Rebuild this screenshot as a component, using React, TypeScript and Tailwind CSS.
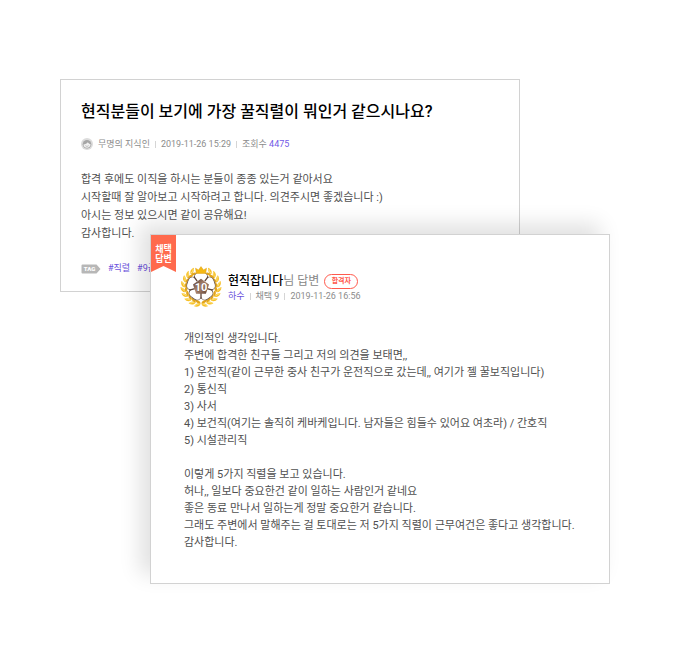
import React from "react";

const LEAF_STEPS = [0, 1, 2, 3, 4, 5, 6, 7, 8];
const PETAL_ANGLES = [0, 72, 144, 216, 288];

function Wreath() {
  return (
    <g>
      {LEAF_STEPS.map((step) => {
        const angle = 10 + step * 17.5;
        return (
          <g key={step} transform={`rotate(${angle} 21 21)`}>
            <path d="M23.500 37.200c-1.600-.6-4.400.5-6 4 3.400.5 5.800-1.200 6-4z" fill="#f6bf27" />
            <path d="M23.500 37c-1.600-2.600-4-3.200-6.200-2 1.400 2.200 3.800 3 6.200 2z" fill="#e3a51a" />
            <path d="M22.500 38c-1.400.3-2.900 1.200-4 2.600" fill="none" stroke="#ffe884" strokeWidth=".8" />
          </g>
        );
      })}
    </g>
  );
}

function Medal() {
  return (
    <svg viewBox="0 0 42 42" className="h-[42px] w-[42px] shrink-0" aria-label="10" role="img">
      <defs>
        <linearGradient id="medal-core" x1="0" y1="0" x2="1" y2="1">
          <stop offset="0" stopColor="#4a3026" />
          <stop offset=".5" stopColor="#b08a74" />
          <stop offset="1" stopColor="#5b3e30" />
        </linearGradient>
      </defs>
      <Wreath />
      <g transform="translate(42 0) scale(-1 1)">
        <Wreath />
      </g>
      {PETAL_ANGLES.map((a) => (
        <rect key={a} x="14.500" y="6.500" width="13" height="12" rx="4.500" fill="#fff" stroke="#75655c" strokeWidth="1" transform={`rotate(${a} 21 20.5)`} />
      ))}
      {PETAL_ANGLES.map((a) => (
        <rect key={a} x="15" y="7" width="12" height="12" rx="4" fill="#fff" transform={`rotate(${a} 21 20.5)`} />
      ))}
      <path d="M15.500 2.200l3 1.800L21 .6 23.500 4l3-1.800-.9 5.200h-9.200z" fill="#f5b914" stroke="#dc9f14" strokeWidth=".5" />
      {PETAL_ANGLES.map((a) => (
        <path key={a} d="M21 27v5.600" stroke="#5b4236" strokeWidth="1.300" transform={`rotate(${a} 21 20.5)`} />
      ))}
      <path d="M21 12.700l8 5.800-3.100 9.200h-9.800L13 18.500z" fill="url(#medal-core)" />
      <text x="21" y="24.500" textAnchor="middle" fontSize="11" fontWeight="700" fill="#fff" stroke="#7d5b4a" strokeWidth="1" paintOrder="stroke" className="font-['Roboto',sans-serif]">
        10
      </text>
    </svg>
  );
}

function UserIcon() {
  return (
    <svg viewBox="0 0 12 12" className="mr-[5px] h-3 w-3" aria-hidden="true">
      <circle cx="6" cy="6" r="6" fill="#dcdcdc" />
      <circle cx="6" cy="6.2" r="4.300" fill="#a6a6a6" />
      <path d="M2.400 6.500C4.400 6.300 6 5.500 6.900 4.300c.5 1 1.500 1.800 2.700 2C9.600 8.500 8 9.800 6 9.800S2.500 8.500 2.400 6.500z" fill="#f1f1f1" />
      <path d="M4.400 7.600c.8 1 2.400 1 3.200 0" fill="none" stroke="#a6a6a6" strokeWidth=".7" />
    </svg>
  );
}

function TagIcon() {
  return (
    <svg viewBox="0 0 20 10" className="h-[10px] w-5" role="img" aria-label="TAG">
      <path d="M1.500 0.500h14l4 4.500-4 4.500h-14a1 1 0 0 1-1-1v-7a1 1 0 0 1 1-1z" fill="#b7b7b7" />
      <text x="8.500" y="7.300" textAnchor="middle" fontSize="6" fontWeight="900" fill="#fff" className="font-['Roboto',sans-serif]">
        TAG
      </text>
    </svg>
  );
}

function Divider() {
  return <span className="mx-[5px] h-[7px] w-px bg-[#d5d5d5]" aria-hidden="true" />;
}

const QUESTION = [
  "합격 후에도 이직을 하시는 분들이 종종 있는거 같아서요",
  "시작할때 잘 알아보고 시작하려고 합니다. 의견주시면 좋겠습니다 :)",
  "아시는 정보 있으시면 같이 공유해요!",
  "감사합니다.",
];

const ANSWER_OPINION = [
  "개인적인 생각입니다.",
  "주변에 합격한 친구들 그리고 저의 의견을 보태면,,",
  "1) 운전직(같이 근무한 중사 친구가 운전직으로 갔는데,, 여기가 젤 꿀보직입니다)",
  "2) 통신직",
  "3) 사서",
  "4) 보건직(여기는 솔직히 케바케입니다. 남자들은 힘들수 있어요 여초라) / 간호직",
  "5) 시설관리직",
];

const ANSWER_SUMMARY = [
  "이렇게 5가지 직렬을 보고 있습니다.",
  "허나,, 일보다 중요한건 같이 일하는 사람인거 같네요",
  "좋은 동료 만나서 일하는게 정말 중요한거 같습니다.",
  "그래도 주변에서 말해주는 걸 토대로는 저 5가지 직렬이 근무여건은 좋다고 생각합니다.",
  "감사합니다.",
];

function Lines({ items }: { items: string[] }) {
  return (
    <p>
      {items.map((line) => (
        <span key={line} className="block">
          {line}
        </span>
      ))}
    </p>
  );
}

export default function App() {
  return (
    <main className="min-h-screen bg-white pt-[79px] pr-[90px] pb-[79px] pl-[60px] font-['Roboto','Noto_Sans_CJK_KR',sans-serif] text-[#505050]">
      <article className="w-full max-w-[460px] border border-[#d2d2d2] px-5 pt-5 pb-[15px]">
        <h1 className="text-base leading-6 font-medium text-black">현직분들이 보기에 가장 꿀직렬이 뭐인거 같으시나요?</h1>
        <div className="mt-[14px] flex h-3 items-center text-[9px] leading-3 text-[#8c8c8c]">
          <UserIcon />
          <span>무명의 지식인</span>
          <Divider />
          <time>2019-11-26 15:29</time>
          <Divider />
          <span>
            조회수 <span className="text-[#7259e6]">4475</span>
          </span>
        </div>
        <div className="mt-[21px] text-[11px] leading-[18px]">
          <Lines items={QUESTION} />
        </div>
        <div className="mt-[19px] flex h-[14px] items-center gap-[7px] text-[9px] text-[#6a50dc]">
          <TagIcon />
          <a href="#job">#직렬</a>
          <a href="#grade9">#9급</a>
        </div>
      </article>

      <article className="relative -mt-[58px] ml-[90px] w-full max-w-[460px] border border-[#d2d2d2] bg-white px-[33px] pt-[31px] pb-[32px] shadow-[-10px_-10px_20px_rgba(0,0,0,0.12)]">
        <strong className="absolute top-0 left-0 flex h-[37px] w-[25px] flex-col items-center bg-[#ff6a4d] pt-[9px] text-[9px] leading-[10px] font-bold text-white [clip-path:polygon(0_0,100%_0,100%_100%,50%_84%,0_100%)]">
          <span>채택</span>
          <span>답변</span>
        </strong>
        <header className="-ml-1 flex items-center gap-[6px]">
          <Medal />
          <div>
            <h2 className="flex items-center text-xs leading-[18px] font-normal text-[#888]">
              <strong className="font-medium text-black">현직잡니다</strong>님 답변
              <span className="ml-[5px] flex h-[15px] w-[34px] items-center justify-center rounded-full border border-[#ff5a4d] text-[7px] font-bold text-[#ff5a4d]">
                합격자
              </span>
            </h2>
            <div className="flex h-3 items-center text-[9px] leading-3 text-[#8c8c8c]">
              <span className="text-[#6a50dc]">하수</span>
              <Divider />
              <span>채택 9</span>
              <Divider />
              <time>2019-11-26 16:56</time>
            </div>
          </div>
        </header>
        <div className="mt-[22px] flex flex-col gap-[17px] text-[11px] leading-[17px]">
          <Lines items={ANSWER_OPINION} />
          <Lines items={ANSWER_SUMMARY} />
        </div>
      </article>
    </main>
  );
}
